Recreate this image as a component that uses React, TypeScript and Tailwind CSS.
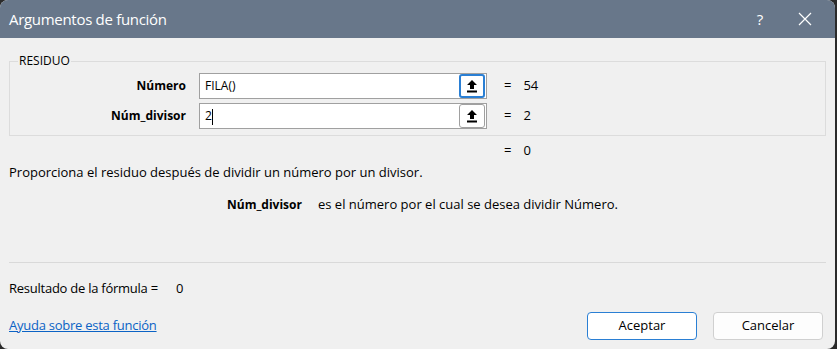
import { useState } from "react";

const UpArrowIcon = () => (
  <svg width="12" height="14" viewBox="0 0 12 14">
    <path d="M6 1 L11 6 H8 V10 H4 V6 H1 Z" fill="#000" />
    <rect x="1" y="11.5" width="10" height="2" fill="#000" />
  </svg>
);

const ArgRow = ({
  label,
  value,
  result,
  focused,
}: {
  label: string;
  value: string;
  result: string;
  focused?: boolean;
}) => (
  <div className="flex items-center h-[26px]">
    <div className="w-[189px] text-right font-bold text-[12px] text-black pr-[13px]">{label}</div>
    <div className="w-[288px] h-[26px] bg-white border border-[#a0a0a0] flex items-center pl-[5px] pr-[1px]">
      <span className="flex-1 text-[12px] text-black">
        {value}
        {focused && <span className="inline-block w-px h-[16px] bg-black align-middle" />}
      </span>
      <button
        className={`w-[26px] h-[24px] rounded-[3px] flex items-center justify-center bg-white ${
          focused ? "border border-[#a0a0a0]" : "border-2 border-[#2a7fd4]"
        }`}
      >
        <UpArrowIcon />
      </button>
    </div>
    <div className="pl-[17px] text-[13px] text-black">=</div>
    <div className="pl-[12px] text-[13px] text-black">{result}</div>
  </div>
);

const App = () => {
  const [divisor] = useState("2");
  return (
    <div className="w-[837px] h-[349px] bg-[#2b2b2b] flex" style={{ fontFamily: '"Open Sans", "Noto Sans", sans-serif' }}>
      <div className="w-[835px] h-[349px] bg-[#f0f0f0] rounded-[8px] overflow-hidden flex flex-col">
        <div className="h-[38px] bg-[#68778a] flex items-center pl-[9px] text-white">
          <div className="flex-1 text-[15px] tracking-[-0.3px]">Argumentos de función</div>
          <div className="w-[30px] text-[15px] text-center">?</div>
          <div className="w-[60px] flex justify-center">
            <svg width="14" height="14" viewBox="0 0 14 14">
              <path d="M1 1 L13 13 M13 1 L1 13" stroke="#fff" strokeWidth="1.2" />
            </svg>
          </div>
        </div>

        <div className="px-[9px] pt-[17px]">
          <fieldset className="border border-[#dcdcdc] h-[81px] pt-[6px] flex flex-col gap-[4px]">
            <legend className="ml-[8px] px-[1px] text-[12px] text-black leading-none">RESIDUO</legend>
            <ArgRow label="Número" value="FILA()" result="54" />
            <ArgRow label="Núm_divisor" value={divisor} result="2" focused />
          </fieldset>
        </div>

        <div className="flex pl-[504px] pt-[6px] text-[13px] text-black h-[24px] items-center">
          <span>=</span>
          <span className="pl-[12px]">0</span>
        </div>
        <div className="pl-[9px] pt-[3px] text-[13px] text-black">
          Proporciona el residuo después de dividir un número por un divisor.
        </div>
        <div className="flex items-baseline pl-[227px] pt-[12px] text-[13px] text-black">
          <span className="font-bold text-[12px] w-[91px]">Núm_divisor</span>
          <span>es el número por el cual se desea dividir Número.</span>
        </div>

        <div className="mx-[9px] mt-[48px] border-t border-[#d9d9d9]" />

        <div className="flex pl-[9px] pt-[16px] text-[13px] text-black">
          <span className="w-[167px] tracking-[-0.25px]">Resultado de la fórmula =</span>
          <span>0</span>
        </div>

        <div className="flex items-center pl-[9px] pr-[12px] pt-[13px]">
          <a href="#" className="flex-1 text-[13px] tracking-[-0.25px] text-[#0b63c5] underline">
            Ayuda sobre esta función
          </a>
          <button className="w-[110px] h-[28px] rounded-[4px] bg-white border border-[#2a7fd4] text-[13px] text-black mr-[16px]">
            Aceptar
          </button>
          <button className="w-[110px] h-[28px] rounded-[4px] bg-[#fdfdfd] border border-[#d0d0d0] text-[13px] text-black">
            Cancelar
          </button>
        </div>
      </div>
    </div>
  );
};

export default App;
